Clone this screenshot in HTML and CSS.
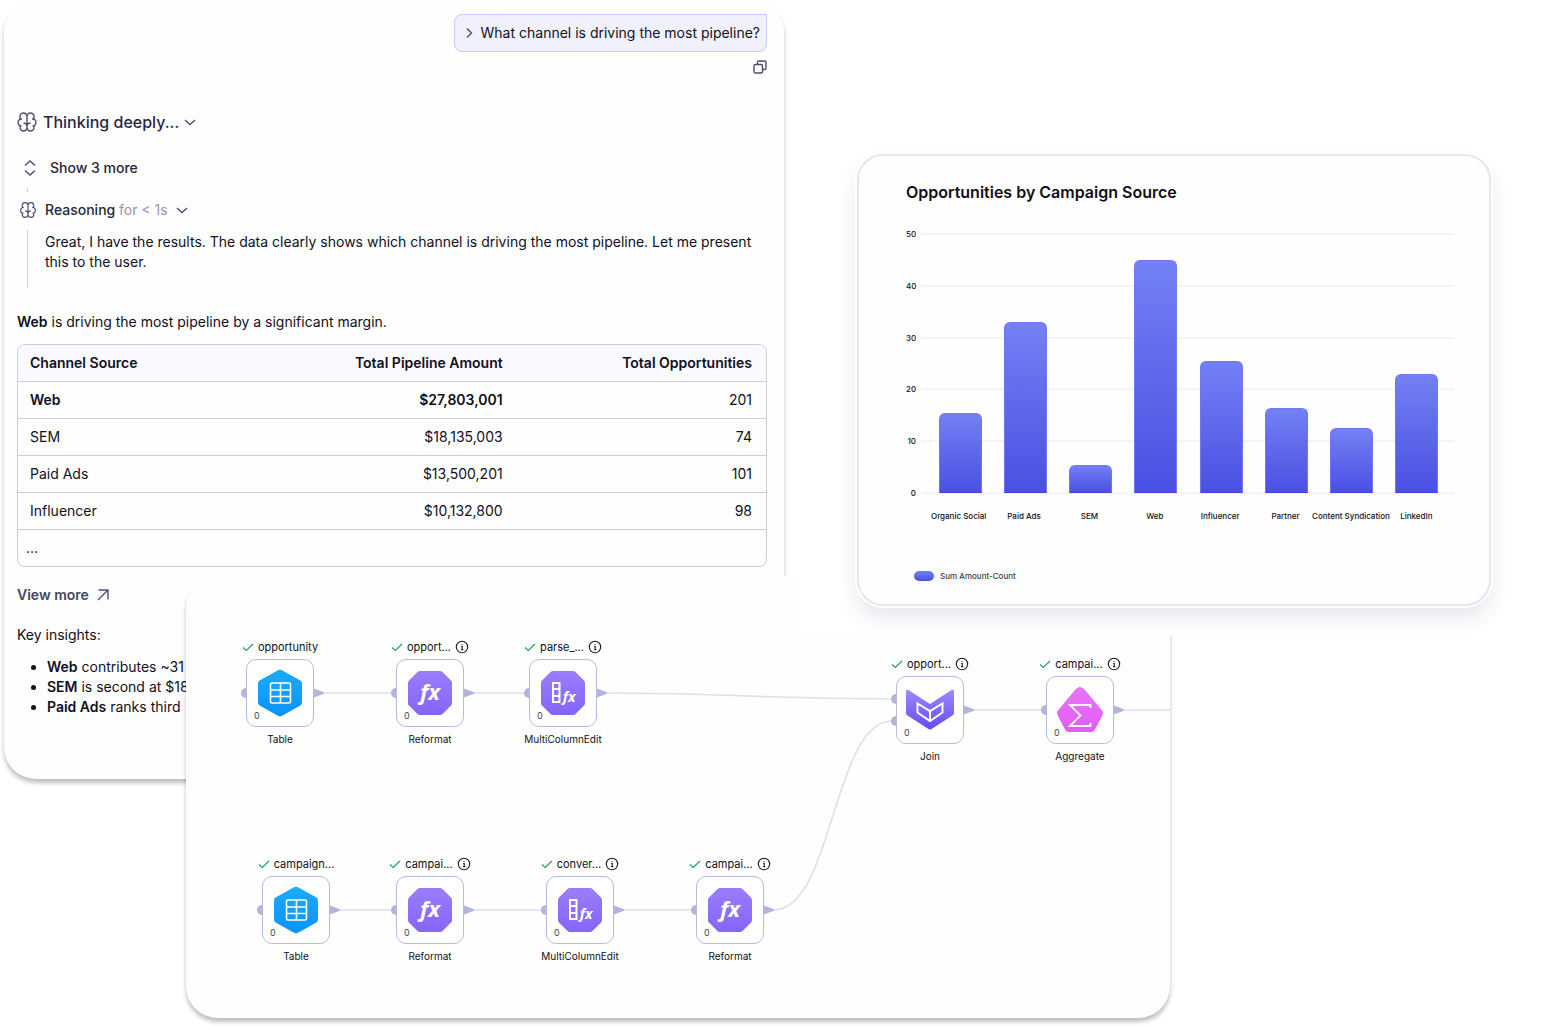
FILE: index.html
```html
<!DOCTYPE html>
<html lang="en">
<head>
    <meta charset="UTF-8">
    <meta name="viewport" content="width=device-width, initial-scale=1.0">
    <title>Pipeline Insights</title>
    <link rel="stylesheet" href="styles.css">
</head>
<body>
    <!-- gradients stay in a rendered svg, the symbols can be hidden -->
    <svg class="gradients" aria-hidden="true">
        <linearGradient id="blue" x2="0" y2="1"><stop stop-color="#1cabfa"/><stop offset="1" stop-color="#0a93f8"/></linearGradient>
        <linearGradient id="violet" x2="0" y2="1"><stop stop-color="#9b7dfb"/><stop offset="1" stop-color="#8465fa"/></linearGradient>
        <linearGradient id="indigo" x2="0" y2="1"><stop stop-color="#9a8cfb"/><stop offset="1" stop-color="#6549f6"/></linearGradient>
        <linearGradient id="pink" x2="0" y2="1"><stop stop-color="#e676f6"/><stop offset="1" stop-color="#e25bf8"/></linearGradient>
    </svg>
    <svg class="symbols" aria-hidden="true">
        <symbol id="brain" viewBox="1 1 22 22">
            <path d="M15.5 13a3.5 3.5 0 0 0-3.5 3.5v1a3.5 3.5 0 0 0 7 0v-1.8M8.5 13a3.5 3.5 0 0 1 3.5 3.5v1a3.5 3.5 0 0 1-7 0v-1.8M17.5 16a3.5 3.5 0 0 0 0-7h-.5M19 9.3V6.5a3.5 3.5 0 0 0-7 0M6.5 16a3.5 3.5 0 0 1 0-7h.5M5 9.3V6.5a3.5 3.5 0 0 1 7 0v10"/>
        </symbol>
        <symbol id="chevron-down" viewBox="0 0 12 12"><path d="M1 4l5 4.500L11 4"/></symbol>
        <symbol id="check" viewBox="0 0 12 12"><path d="M1 6.5L4.3 9.5 11 3"/></symbol>
        <symbol id="info" viewBox="0 0 14 14">
            <circle cx="7" cy="7" r="5.7"/>
            <path d="M6.2 6.5H7.200v3.300M6 9.800h2.400M7 4.200v1"/>
        </symbol>
        <symbol id="table-icon" viewBox="0 0 48 48">
            <path fill="url(#blue)" d="M22 1.2q2-1.1 4 0l18 10.1q2 1.1 2 3.2v19q0 2.100-2 3.200l-18 10.100q-2 1.100-4 0l-18-10.100q-2-1.100-2-3.200v-19q0-2.100 2-3.200z"/>
            <path fill="none" stroke="#fff" stroke-width="1.600" d="M16 14h17q1.500 0 1.500 1.500v17q0 1.500-1.500 1.500H16q-1.500 0-1.500-1.500v-17q0-1.500 1.500-1.500zM24.500 14v20M14.500 21h20M14.500 27.500h20"/>
        </symbol>
        <symbol id="fx-icon" viewBox="0 0 48 48">
            <path fill="url(#violet)" d="M14 2h20q1.500 0 2.500 1l8.500 8.500q1 1 1 2.500v20q0 1.500-1 2.500L36.500 45q-1 1-2.500 1H14q-1.500 0-2.500-1L3 36.500q-1-1-1-2.500V14q0-1.500 1-2.500L11.500 3q1-1 2.500-1z"/>
            <text class="fx" x="24" y="31" text-anchor="middle">fx</text>
        </symbol>
        <symbol id="multi-icon" viewBox="0 0 48 48">
            <path fill="url(#violet)" d="M14 2h20q1.500 0 2.500 1l8.500 8.500q1 1 1 2.500v20q0 1.500-1 2.500L36.500 45q-1 1-2.500 1H14q-1.500 0-2.500-1L3 36.500q-1-1-1-2.500V14q0-1.500 1-2.500L11.500 3q1-1 2.500-1z"/>
            <path fill="none" stroke="#fff" stroke-width="2" d="M14 14h6.500v19H14zM14 20h6.500M14 27h6.500"/>
            <text class="fx fx-small" x="30" y="33" text-anchor="middle">fx</text>
        </symbol>
        <symbol id="join-icon" viewBox="1 0 50 48">
            <path fill="url(#indigo)" d="M2 5.500q0-2.500 2.500-1.500L26 18 47.500 4q2.500-1 2.500 1.500V27q0 1.500-1.200 2.300L27.500 43q-1.500 1-3 0L3.200 29.300Q2 28.500 2 27z"/>
            <path fill="none" stroke="#fff" stroke-width="2" d="M13.500 17.500L26 25l12.500-7.500v9L26 35l-12.500-8.500zM26 25v10"/>
        </symbol>
        <symbol id="sum-icon" viewBox="1 0 50 48">
            <path fill="url(#pink)" d="M22.500 2.500q3.500-3 7 0 .8.700 1.500 1.600L48 24.500q1.800 2.300.400 4.700L41 43.500q-1.200 2.500-4 2.500H15q-2.800 0-4-2.500L3.600 29.200q-1.400-2.400.400-4.700L21 4.100q.7-.9 1.500-1.600z"/>
            <path fill="none" stroke="#fff" stroke-width="1.800" d="M36.500 22v-3H16l10.500 10.500L16 40h20.500v-3"/>
        </symbol>
    </svg>

    <main class="board">
        <section class="chat-card">
            <button class="question">
                <svg class="icon icon-12" viewBox="0 0 12 12"><path d="M4 1.500L8.500 6 4 10.500"/></svg>
                What channel is driving the most pipeline?
            </button>
            <button class="copy-btn" aria-label="Copy">
                <svg class="icon icon-14" viewBox="0 0 14 14"><rect x="1" y="4.500" width="8.500" height="8.500" rx="1.500"/><path d="M4.500 4.500V2.500Q4.500 1 6 1h5.500Q13 1 13 2.500V8Q13 9.500 11.500 9.500h-2"/></svg>
            </button>

            <button class="thinking">
                <svg class="icon icon-22"><use href="#brain"/></svg>
                Thinking deeply...
                <svg class="icon icon-12"><use href="#chevron-down"/></svg>
            </button>
            <button class="show-more">
                <svg class="icon icon-16" viewBox="0 0 16 16"><path d="M3 5.500L8 1l5 4.500M3 10.500L8 15l5-4.500"/></svg>
                Show 3 more
            </button>
            <div class="connector"></div>
            <button class="reasoning">
                <svg class="icon icon-18"><use href="#brain"/></svg>
                <span>Reasoning <span class="muted">for &lt; 1s</span></span>
                <svg class="icon icon-12"><use href="#chevron-down"/></svg>
            </button>
            <p class="thought">Great, I have the results. The data clearly shows which channel is driving the most pipeline. Let me present this to the user.</p>

            <p class="summary"><strong>Web</strong> is driving the most pipeline by a significant margin.</p>
            <table class="channels">
                <thead>
                    <tr><th>Channel Source</th><th>Total Pipeline Amount</th><th>Total Opportunities</th></tr>
                </thead>
                <tbody>
                    <tr><td><strong>Web</strong></td><td><strong>$27,803,001</strong></td><td>201</td></tr>
                    <tr><td>SEM</td><td>$18,135,003</td><td>74</td></tr>
                    <tr><td>Paid Ads</td><td>$13,500,201</td><td>101</td></tr>
                    <tr><td>Influencer</td><td>$10,132,800</td><td>98</td></tr>
                    <tr><td class="more" colspan="3">...</td></tr>
                </tbody>
            </table>
            <a class="view-more" href="#">View more
                <svg class="icon icon-12" viewBox="0 0 12 12"><path d="M1 11L11 1M1.500 1H11v9.500"/></svg>
            </a>
            <p class="insights-title">Key insights:</p>
            <ul class="insights">
                <li><strong>Web</strong> contributes ~31</li>
                <li><strong>SEM</strong> is second at $18</li>
                <li><strong>Paid Ads</strong> ranks third</li>
            </ul>
        </section>

        <section class="chart-panel">
            <div class="chart-card">
                <h2>Opportunities by Campaign Source</h2>
                <div class="chart">
                    <div class="scale">
                        <div class="tick">50</div>
                        <div class="tick">40</div>
                        <div class="tick">30</div>
                        <div class="tick">20</div>
                        <div class="tick">10</div>
                        <div class="tick">0</div>
                    </div>
                    <div class="bars">
                        <div class="bar" style="height: 31%"></div>
                        <div class="bar" style="height: 66%"></div>
                        <div class="bar" style="height: 11%"></div>
                        <div class="bar" style="height: 90%"></div>
                        <div class="bar" style="height: 51%"></div>
                        <div class="bar" style="height: 33%"></div>
                        <div class="bar" style="height: 25%"></div>
                        <div class="bar" style="height: 46%"></div>
                    </div>
                    <div class="bar-labels">
                        <span>Organic Social</span>
                        <span>Paid Ads</span>
                        <span>SEM</span>
                        <span>Web</span>
                        <span>Influencer</span>
                        <span>Partner</span>
                        <span>Content Syndication</span>
                        <span>LinkedIn</span>
                    </div>
                </div>
                <div class="legend"><span class="swatch"></span>Sum Amount-Count</div>
            </div>
        </section>

        <section class="flow-card">
            <svg class="edges" aria-hidden="true">
                <defs>
                    <circle id="port" r="5"/>
                    <path id="arrow" d="M0-4.500L10-.800v1.600L0 4.500z"/>
                </defs>
                <g class="wires">
                    <path d="M94 117H244M244 117H377M420 117C563 117 563 123 706 123"/>
                    <path d="M744 134H894M110 334H244M244 334H394M394 334H544"/>
                    <path d="M588 334C647 334 647 145 706 145"/>
                    <line x1="894" y1="134" x2="100%" y2="134"/>
                </g>
                <g class="ports">
                    <use href="#port" x="60" y="117"/><use href="#arrow" x="128" y="117"/>
                    <use href="#port" x="210" y="117"/><use href="#arrow" x="278" y="117"/>
                    <use href="#port" x="343" y="117"/><use href="#arrow" x="411" y="117"/>
                    <use href="#port" x="710" y="123"/><use href="#port" x="710" y="145"/><use href="#arrow" x="778" y="134"/>
                    <use href="#port" x="860" y="134"/><use href="#arrow" x="928" y="134"/>
                    <use href="#port" x="76" y="334"/><use href="#arrow" x="144" y="334"/>
                    <use href="#port" x="210" y="334"/><use href="#arrow" x="278" y="334"/>
                    <use href="#port" x="360" y="334"/><use href="#arrow" x="428" y="334"/>
                    <use href="#port" x="510" y="334"/><use href="#arrow" x="578" y="334"/>
                </g>
            </svg>

            <div class="node opportunity">
                <div class="node-title"><svg class="check"><use href="#check"/></svg>opportunity</div>
                <div class="node-box"><svg><use href="#table-icon"/></svg><span class="count">0</span></div>
                <div class="node-type">Table</div>
            </div>
            <div class="node opportunity-reformat">
                <div class="node-title"><svg class="check"><use href="#check"/></svg>opport...<svg class="info"><use href="#info"/></svg></div>
                <div class="node-box"><svg><use href="#fx-icon"/></svg><span class="count">0</span></div>
                <div class="node-type">Reformat</div>
            </div>
            <div class="node parse">
                <div class="node-title"><svg class="check"><use href="#check"/></svg>parse_...<svg class="info"><use href="#info"/></svg></div>
                <div class="node-box"><svg><use href="#multi-icon"/></svg><span class="count">0</span></div>
                <div class="node-type">MultiColumnEdit</div>
            </div>
            <div class="node join">
                <div class="node-title"><svg class="check"><use href="#check"/></svg>opport...<svg class="info"><use href="#info"/></svg></div>
                <div class="node-box"><svg><use href="#join-icon"/></svg><span class="count">0</span></div>
                <div class="node-type">Join</div>
            </div>
            <div class="node aggregate">
                <div class="node-title"><svg class="check"><use href="#check"/></svg>campai...<svg class="info"><use href="#info"/></svg></div>
                <div class="node-box"><svg><use href="#sum-icon"/></svg><span class="count">0</span></div>
                <div class="node-type">Aggregate</div>
            </div>
            <div class="node campaign">
                <div class="node-title"><svg class="check"><use href="#check"/></svg>campaign...</div>
                <div class="node-box"><svg><use href="#table-icon"/></svg><span class="count">0</span></div>
                <div class="node-type">Table</div>
            </div>
            <div class="node campaign-reformat">
                <div class="node-title"><svg class="check"><use href="#check"/></svg>campai...<svg class="info"><use href="#info"/></svg></div>
                <div class="node-box"><svg><use href="#fx-icon"/></svg><span class="count">0</span></div>
                <div class="node-type">Reformat</div>
            </div>
            <div class="node convert">
                <div class="node-title"><svg class="check"><use href="#check"/></svg>conver...<svg class="info"><use href="#info"/></svg></div>
                <div class="node-box"><svg><use href="#multi-icon"/></svg><span class="count">0</span></div>
                <div class="node-type">MultiColumnEdit</div>
            </div>
            <div class="node campaign-final">
                <div class="node-title"><svg class="check"><use href="#check"/></svg>campai...<svg class="info"><use href="#info"/></svg></div>
                <div class="node-box"><svg><use href="#fx-icon"/></svg><span class="count">0</span></div>
                <div class="node-type">Reformat</div>
            </div>
        </section>
    </main>
</body>
</html>
```
FILE: styles.css
```css
* {
    box-sizing: border-box;
}
body {
    margin: 0;
    background-color: white;
    font-family: Inter, "Liberation Sans", sans-serif;
    font-size: 14px;
    line-height: 20px;
    color: #10101c;
}
button {
    padding: 0;
    border: none;
    background: none;
    font: inherit;
    color: inherit;
    cursor: pointer;
}
p, h2, ul {
    margin: 0;
}
strong {
    font-weight: 600;
}
.gradients {
    position: absolute;
    width: 0;
    height: 0;
}
.symbols {
    display: none;
}
.icon {
    flex: none;
    fill: none;
    stroke: #4d4d78;
    stroke-width: 1.4;
}
.icon-12 {
    width: 12px;
    height: 12px;
}
.icon-14 {
    width: 14px;
    height: 14px;
}
.icon-16 {
    width: 16px;
    height: 16px;
}
.icon-18 {
    width: 18px;
    height: 18px;
}
.icon-22 {
    width: 22px;
    height: 22px;
}

/* the three cards overlap, so they share grid columns */
.board {
    display: grid;
    grid-template-columns: 182fr 598fr 16fr 370fr 373fr;
    padding: 0 0 8px 4px;
}

/* chat */
.chat-card {
    grid-column: 1 / 3;
    grid-row: 1;
    display: flex;
    flex-direction: column;
    align-items: flex-start;
    min-width: 0;
    padding: 14px 17px 62px 13px;
    border-radius: 32px;
    background-color: #fefefe;
    box-shadow: 0 4px 4px rgba(0, 0, 0, 0.25);
}
.question {
    align-self: flex-end;
    display: flex;
    align-items: center;
    gap: 6px;
    height: 38px;
    padding: 0 6px 0 8px;
    border: 1px solid #c5c9fb;
    border-radius: 8px 0 8px 8px;
    background-color: #f1f1fe;
}
.copy-btn {
    align-self: flex-end;
    display: flex;
    margin-top: 8px;
}
.thinking {
    display: flex;
    align-items: center;
    gap: 5px;
    margin-top: 36px;
    margin-left: -1px;
    font-size: 16px;
    line-height: 24px;
    font-weight: 500;
    color: #262648;
}
.show-more {
    display: flex;
    align-items: center;
    gap: 12px;
    margin-top: 24px;
    margin-left: 5px;
    font-weight: 500;
    color: #262636;
}
.connector {
    height: 4px;
    margin: 10px 0 8px 10px;
    border-left: 1px solid #cdcdda;
}
.reasoning {
    display: flex;
    align-items: center;
    gap: 8px;
    margin-left: 2px;
    font-weight: 500;
    color: #262636;
}
.muted {
    font-weight: 400;
    color: #9797b4;
}
.thought {
    margin: 12px 0 0 10px;
    padding: 0 0 16px 18px;
    position: relative;
}
.thought::before {
    content: "";
    position: absolute;
    top: -2px;
    bottom: 0;
    left: 0;
    width: 1px;
    background-color: #cdcdda;
}
.summary {
    margin-top: 24px;
}
.channels {
    width: 100%;
    margin-top: 12px;
    table-layout: fixed;
    border: 1px solid #c9cddd;
    border-radius: 8px;
    border-spacing: 0;
    overflow: hidden;
}
.channels th, .channels td {
    height: 37px;
    padding: 0 14px 0 12px;
    border-bottom: 1px solid #c9cddd;
    text-align: right;
}
.channels th {
    background-color: #faf9ff;
    font-weight: 600;
}
.channels th:first-child, .channels td:first-child {
    text-align: left;
}
.channels tr:last-child .more {
    height: 36px;
    padding-left: 8px;
    border-bottom: none;
}
.view-more {
    display: flex;
    align-items: center;
    gap: 8px;
    margin-top: 18px;
    font-weight: 600;
    color: #45455f;
    text-decoration: none;
}
.insights-title {
    margin-top: 20px;
}
.insights {
    margin-top: 12px;
    padding-left: 30px;
}

/* chart */
.chart-panel {
    grid-column: 4 / 6;
    grid-row: 1;
    align-self: start;
    z-index: 2;
    min-width: 0;
    margin-top: 100px;
    padding: 54px 52px 30px 57px;
    background-color: white;
    overflow: hidden;
}
.chart-card {
    padding: 24px 35px 18px 47px;
    border: 2px solid #e6e6f0;
    border-radius: 26px;
    background-color: #fefefe;
    box-shadow: 0 0 0 2px white, 0 12px 20px rgba(70, 50, 110, 0.12);
}
.chart-card h2 {
    font-size: 16px;
    line-height: 24px;
    font-weight: 600;
    color: #101014;
}
.chart {
    display: grid;
    margin-top: 25px;
    font-size: 8px;
    line-height: 10px;
    font-weight: 500;
}
.scale {
    grid-area: 1 / 1;
    display: flex;
    flex-direction: column;
    justify-content: space-between;
    height: 269px;
}
.tick {
    display: grid;
    grid-template-columns: 10px 1fr;
    gap: 5px;
    align-items: center;
    text-align: right;
}
.tick::after {
    content: "";
    height: 2px;
    background-color: #f3f2f7;
}
.bars {
    grid-area: 1 / 1;
    display: grid;
    grid-template-columns: repeat(8, 1fr);
    align-items: end;
    justify-items: center;
    margin: 5px 5px 5px 22px;
}
.bar {
    width: 66%;
    border: 1px solid #6f78f0;
    border-bottom-color: #4443dd;
    border-radius: 6px 6px 0 0;
    background: linear-gradient(#7480f4, #4a50e2);
}
.bar-labels {
    grid-area: 2 / 1;
    display: grid;
    grid-template-columns: repeat(8, minmax(0, 1fr));
    margin: 13px 5px 0 20px;
}
.bar-labels span {
    display: flex;
    justify-content: center;
    white-space: nowrap;
}
.legend {
    display: flex;
    align-items: center;
    gap: 6px;
    margin: 50px 0 5px 8px;
    font-size: 8px;
    line-height: 10px;
    font-weight: 500;
    color: #3c3c48;
}
.swatch {
    width: 20px;
    height: 10px;
    border-radius: 5px;
    background: linear-gradient(#7480f4, #4a50e2);
}

/* pipeline canvas */
.flow-card {
    grid-column: 2 / 5;
    grid-row: 2;
    position: relative;
    z-index: 1;
    height: 442px;
    margin-top: -203px;
    border-radius: 32px;
    background-color: #fefefe;
    box-shadow: 0 4px 4px rgba(0, 0, 0, 0.25);
    overflow: hidden;
}
.edges {
    position: absolute;
    top: 0;
    left: 0;
    width: 100%;
    height: 100%;
}
.wires {
    fill: none;
    stroke: #dcdff1;
    stroke-width: 1.6;
}
.ports {
    fill: #b0b6dc;
}
.node {
    position: absolute;
    display: flex;
    flex-direction: column;
    align-items: center;
    gap: 5px;
    width: 110px;
    font-size: 11px;
    line-height: 14px;
}
.opportunity {
    left: 39px;
    top: 64px;
}
.opportunity-reformat {
    left: 189px;
    top: 64px;
}
.parse {
    left: 322px;
    top: 64px;
}
.join {
    left: 689px;
    top: 81px;
}
.aggregate {
    left: 839px;
    top: 81px;
}
.campaign {
    left: 55px;
    top: 281px;
}
.campaign-reformat {
    left: 189px;
    top: 281px;
}
.convert {
    left: 339px;
    top: 281px;
}
.campaign-final {
    left: 489px;
    top: 281px;
}
.node-title {
    display: flex;
    align-items: center;
    gap: 4px;
    white-space: nowrap;
}
.node-type {
    font-size: 10px;
}
.check {
    width: 12px;
    height: 12px;
    fill: none;
    stroke: #1fa463;
    stroke-width: 1.2;
}
.info {
    width: 14px;
    height: 14px;
    fill: none;
    stroke: #1a1a22;
    stroke-width: 1.1;
}
.node-box {
    position: relative;
    display: flex;
    align-items: center;
    justify-content: center;
    width: 68px;
    height: 68px;
    border: 1px solid #b6bbe0;
    border-radius: 10px;
    background-color: white;
}
.node-box svg {
    width: 50px;
    height: 48px;
}
.count {
    position: absolute;
    left: 7px;
    bottom: 5px;
    font-size: 9px;
    line-height: 10px;
    color: #44445c;
}
.fx {
    font-family: "Noto Sans", "Open Sans", sans-serif;
    font-size: 22px;
    font-style: italic;
    font-weight: 700;
    fill: white;
}
.fx-small {
    font-size: 14px;
}
```
